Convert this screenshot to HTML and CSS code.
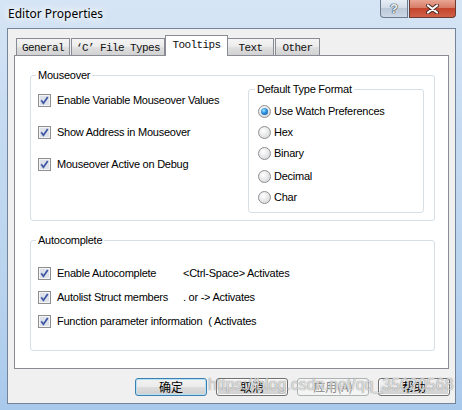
FILE: index.html
```html
<!DOCTYPE html>
<html>
<head>
<meta charset="utf-8">
<link rel="stylesheet" href="styles.css">
</head>
<body>
<div class="window">
  <div class="titlebar">
    <span class="title">Editor Properties</span>
    <div class="caption">
      <div class="cap-help">?</div>
      <div class="cap-close">
        <svg width="15" height="10" viewBox="0 0 15 10"><path d="M3 1.5 L12 8.5 M12 1.5 L3 8.5" stroke="#4a2a24" stroke-width="4" stroke-linecap="round"/><path d="M3 1.5 L12 8.5 M12 1.5 L3 8.5" stroke="#fff" stroke-width="2.2" stroke-linecap="round"/></svg>
      </div>
    </div>
  </div>
  <div class="client">
    <div class="tabs">
      <div class="tab t-general">General</div>
      <div class="tab t-cfile">‘C’ File Types</div>
      <div class="tab sel t-tooltips">Tooltips</div>
      <div class="tab t-text">Text</div>
      <div class="tab t-other">Other</div>
    </div>
    <div class="panel">
      <fieldset class="group mouseover">
        <legend>Mouseover</legend>
        <div class="mo-body">
          <div class="checks">
            <div class="row"><svg class="cb" width="13" height="13" viewBox="0 0 13 13"><rect x="0.5" y="0.5" width="12" height="12" fill="#f4f4f4" stroke="#8e8f8f"/><rect x="2" y="2" width="9" height="9" fill="#dde2ea"/><path d="M3.2 6.3 L5.4 9.2 L9.8 3" fill="none" stroke="#3f58a4" stroke-width="1.8"/></svg><span>Enable Variable Mouseover Values</span></div>
            <div class="row"><svg class="cb" width="13" height="13" viewBox="0 0 13 13"><rect x="0.5" y="0.5" width="12" height="12" fill="#f4f4f4" stroke="#8e8f8f"/><rect x="2" y="2" width="9" height="9" fill="#dde2ea"/><path d="M3.2 6.3 L5.4 9.2 L9.8 3" fill="none" stroke="#3f58a4" stroke-width="1.8"/></svg><span>Show Address in Mouseover</span></div>
            <div class="row"><svg class="cb" width="13" height="13" viewBox="0 0 13 13"><rect x="0.5" y="0.5" width="12" height="12" fill="#f4f4f4" stroke="#8e8f8f"/><rect x="2" y="2" width="9" height="9" fill="#dde2ea"/><path d="M3.2 6.3 L5.4 9.2 L9.8 3" fill="none" stroke="#3f58a4" stroke-width="1.8"/></svg><span>Mouseover Active on Debug</span></div>
          </div>
          <fieldset class="group dtf">
            <legend>Default Type Format</legend>
            <div class="radios">
              <div class="rrow"><span class="radio on"></span><span>Use Watch Preferences</span></div>
              <div class="rrow"><span class="radio"></span><span>Hex</span></div>
              <div class="rrow"><span class="radio"></span><span>Binary</span></div>
              <div class="rrow extra"><span class="radio"></span><span>Decimal</span></div>
              <div class="rrow"><span class="radio"></span><span>Char</span></div>
            </div>
          </fieldset>
        </div>
      </fieldset>
      <fieldset class="group auto">
        <legend>Autocomplete</legend>
        <div class="auto-rows">
          <div class="row"><svg class="cb" width="13" height="13" viewBox="0 0 13 13"><rect x="0.5" y="0.5" width="12" height="12" fill="#f4f4f4" stroke="#8e8f8f"/><rect x="2" y="2" width="9" height="9" fill="#dde2ea"/><path d="M3.2 6.3 L5.4 9.2 L9.8 3" fill="none" stroke="#3f58a4" stroke-width="1.8"/></svg><span class="key">Enable Autocomplete</span><span>&lt;Ctrl-Space&gt; Activates</span></div>
          <div class="row"><svg class="cb" width="13" height="13" viewBox="0 0 13 13"><rect x="0.5" y="0.5" width="12" height="12" fill="#f4f4f4" stroke="#8e8f8f"/><rect x="2" y="2" width="9" height="9" fill="#dde2ea"/><path d="M3.2 6.3 L5.4 9.2 L9.8 3" fill="none" stroke="#3f58a4" stroke-width="1.8"/></svg><span class="key">Autolist Struct members</span><span>. or -&gt; Activates</span></div>
          <div class="row"><svg class="cb" width="13" height="13" viewBox="0 0 13 13"><rect x="0.5" y="0.5" width="12" height="12" fill="#f4f4f4" stroke="#8e8f8f"/><rect x="2" y="2" width="9" height="9" fill="#dde2ea"/><path d="M3.2 6.3 L5.4 9.2 L9.8 3" fill="none" stroke="#3f58a4" stroke-width="1.8"/></svg><span class="key">Function parameter information</span><span>( Activates</span></div>
        </div>
      </fieldset>
    </div>
    <div class="buttons">
      <div class="btn default">确定</div>
      <div class="btn">取消</div>
      <div class="btn disabled">应用(A)</div>
      <div class="btn">帮助</div>
    </div>
  </div>
  <div class="watermark">https://blog.csdn.net/qq_35020568</div>
</div>
</body>
</html>
```
FILE: styles.css
```css
* { box-sizing: border-box; }
html, body { margin: 0; padding: 0; }
body {
  width: 462px;
  height: 410px;
  overflow: hidden;
  font-family: "Liberation Sans", Arial, sans-serif;
  font-size: 11px;
  color: #000;
}
.window {
  position: relative;
  width: 462px;
  height: 410px;
  background: linear-gradient(180deg, #d6e5f5 0%, #c6dbf1 30%, #b9d3ee 70%, #a9c9ec 100%);
}
.titlebar {
  display: flex;
  align-items: flex-start;
  height: 28px;
}
.title {
  font-family: "Noto Sans", sans-serif;
  font-size: 12px;
  line-height: 28px;
  padding-left: 8px;
  color: #000;
  text-shadow: 0 0 6px #fff, 0 0 10px #fff, 0 0 14px #fff;
}
.caption {
  margin-left: auto;
  margin-right: 6px;
  display: flex;
  gap: 1px;
}
.cap-help {
  width: 28px;
  height: 18px;
  border: 1px solid #6b7b8d;
  border-top: none;
  border-radius: 0 0 0 4px;
  background: linear-gradient(180deg, #e6edf5 0%, #d3dde9 45%, #bac8d8 50%, #cdd8e5 100%);
  display: flex;
  align-items: center;
  justify-content: center;
  font: bold 13px "Liberation Sans", sans-serif;
  color: #eef2f6;
  text-shadow: 0 0 1px #2e3a48, 0 0 1px #2e3a48, 0 0 1px #2e3a48;
}
.cap-close {
  width: 47px;
  height: 18px;
  border: 1px solid #6d3a31;
  border-top: none;
  border-radius: 0 0 4px 0;
  background: linear-gradient(180deg, #e9a594 0%, #d77d68 45%, #c4452c 50%, #cf6148 100%);
  display: flex;
  align-items: center;
  justify-content: center;
}
.client {
  margin-left: 7px;
  width: 449px;
  height: 376px;
  border: 1px solid #72839a;
  background: #f0f0f0;
}
.tabs {
  position: relative;
  z-index: 1;
  display: flex;
  align-items: flex-end;
  height: 21px;
  margin: 6px 0 -1px 8px;
}
.tab {
  height: 17px;
  margin-bottom: 1px;
  border: 1px solid #898c95;
  border-bottom: none;
  background: linear-gradient(180deg, #f4f4f4 0%, #ececec 45%, #dedede 55%, #d2d2d2 100%);
  font-family: "Liberation Mono", monospace;
  font-size: 11px;
  letter-spacing: -0.6px;
  color: #111;
  display: flex;
  align-items: center;
  justify-content: center;
  padding-top: 1px;
  white-space: nowrap;
}
.t-general { width: 54px; }
.t-cfile { width: 94px; margin-left: 1px; }
.t-tooltips { width: 63px; }
.t-text { width: 46px; border-left: none; }
.t-other { width: 45px; margin-left: 1px; }
.tab.sel {
  height: 21px;
  margin-bottom: 0;
  background: #fff;
  align-items: flex-start;
  padding-top: 3px;
}
.panel {
  margin-left: 6px;
  width: 435px;
  height: 314px;
  border: 1px solid #898c95;
  background: #fff;
  padding-left: 15px;
}
.group {
  margin: 0;
  padding: 0;
  border: 1px solid #d5dfe5;
  border-radius: 3px;
  min-inline-size: 0;
}
.group legend {
  padding: 0 2px;
  margin-left: 5px;
  line-height: 13px;
  font-size: 11px;
  letter-spacing: -0.25px;
}
.mouseover {
  width: 405px;
  margin-top: 13px;
}
.mo-body {
  display: flex;
  justify-content: space-between;
  align-items: flex-start;
}
.checks {
  display: flex;
  flex-direction: column;
  gap: 12px;
  padding: 8px 0 0 7px;
}
.row {
  display: flex;
  align-items: center;
  height: 20px;
  gap: 6px;
  letter-spacing: -0.25px;
  white-space: nowrap;
}
.cb { flex: none; display: block; }
.dtf {
  width: 176px;
  margin: 1px 10px 7px 0;
}
.dtf legend { margin-left: 6px; }
.radios {
  display: flex;
  flex-direction: column;
  gap: 1px;
  padding: 5px 0 5px 9px;
}
.rrow {
  display: flex;
  align-items: center;
  height: 20px;
  gap: 3px;
  letter-spacing: -0.25px;
  white-space: nowrap;
}
.rrow.extra { margin-top: 2px; }
.radio {
  flex: none;
  width: 13px;
  height: 13px;
  border-radius: 50%;
  border: 1px solid #8c8f93;
  background: radial-gradient(circle at 40% 35%, #ffffff 0%, #eaeaea 45%, #cfd1d3 100%);
  display: flex;
  align-items: center;
  justify-content: center;
}
.radio.on::after {
  content: "";
  width: 7px;
  height: 7px;
  border-radius: 50%;
  background: radial-gradient(circle at 40% 35%, #9fe3ff 0%, #2a8fe0 45%, #0c4a93 100%);
}
.auto {
  width: 405px;
  margin-top: 13px;
}
.auto-rows {
  display: flex;
  flex-direction: column;
  gap: 4px;
  padding: 16px 0 19px 7px;
}
.key { min-width: 120px; }
.buttons {
  display: flex;
  justify-content: flex-end;
  gap: 9px;
  margin-top: 9px;
  padding-right: 5px;
}
.btn {
  width: 72px;
  height: 18px;
  border: 1px solid #707070;
  border-radius: 3px;
  background: linear-gradient(180deg, #f2f2f2 0%, #ebebeb 50%, #dddddd 50%, #cfcfcf 100%);
  box-shadow: inset 0 0 0 1px #fafafa;
  font-family: "Noto Sans CJK SC", sans-serif;
  font-size: 12px;
  line-height: 12px;
  display: flex;
  align-items: center;
  justify-content: center;
}
.btn.default {
  border-color: #3c7fb1;
  box-shadow: inset 0 0 0 1px #b6e1f7;
}
.btn.disabled {
  border-color: #adb2b5;
  background: #f4f4f4;
  box-shadow: none;
  color: #8a8a8a;
}
.watermark {
  position: absolute;
  left: 208px;
  top: 376px;
  font-family: "Liberation Sans", sans-serif;
  font-size: 16px;
  color: rgba(255, 255, 255, 0.7);
  text-shadow: 0 0 1px rgba(80, 80, 80, 0.55), 0 0 1px rgba(80, 80, 80, 0.4);
  white-space: nowrap;
  pointer-events: none;
}
```
